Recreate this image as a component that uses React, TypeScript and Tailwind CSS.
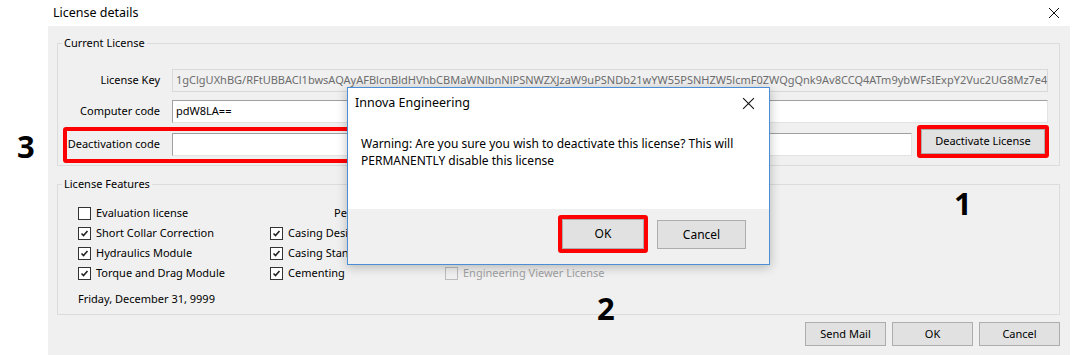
import React from 'react';

const LICENSE_KEY =
  '1gClgUXhBG/RFtUBBACl1bwsAQAyAFBlcnBldHVhbCBMaWNlbnNlPSNWZXJzaW9uPSNDb21wYW55PSNHZW5lcmF0ZWQgQnk9Av8CCQ4ATm9ybWFsIExpY2Vuc2UG8Mz7e49zlK2';

function CloseIcon({ size = 12 }: { size?: number }) {
  return (
    <svg width={size} height={size} viewBox="0 0 12 12" className="block">
      <path d="M1 1 L11 11 M11 1 L1 11" stroke="#111" strokeWidth="1" fill="none" />
    </svg>
  );
}

function Check({ checked, disabled }: { checked?: boolean; disabled?: boolean }) {
  return (
    <span
      className={
        'flex h-[13px] w-[13px] shrink-0 items-center justify-center border ' +
        (disabled ? 'border-[#bcbcbc] bg-[#f0f0f0]' : 'border-[#333] bg-white')
      }
    >
      {checked && (
        <svg width="9" height="9" viewBox="0 0 9 9">
          <path d="M1.5 4.5 L3.5 6.5 L7.5 2" stroke="#222" strokeWidth="1.6" fill="none" />
        </svg>
      )}
    </span>
  );
}

function Feature({ label, checked, disabled }: { label: string; checked?: boolean; disabled?: boolean }) {
  return (
    <div className="flex h-[20px] items-center gap-[5px] whitespace-nowrap">
      <Check checked={checked} disabled={disabled} />
      <span className={disabled ? 'text-[#a0a0a0]' : 'text-black'}>{label}</span>
    </div>
  );
}

function WinButton({ children, className = '' }: { children: React.ReactNode; className?: string }) {
  return (
    <button
      className={
        'flex items-center justify-center border border-[#adadad] bg-[#e1e1e1] text-black ' + className
      }
    >
      {children}
    </button>
  );
}

const inputBorder =
  'border-t border-l border-t-[#a0a0a0] border-l-[#a0a0a0] border-r border-b border-r-[#e3e3e3] border-b-[#e3e3e3]';

export default function App() {
  return (
    <div
      className="relative flex h-[355px] w-[1076px] flex-col overflow-hidden bg-white text-[11px] text-black"
      style={{ fontFamily: '"Segoe UI", "Noto Sans", sans-serif' }}
    >
      {/* title bar */}
      <div className="flex h-[26px] shrink-0 items-center justify-between pl-[53px] pr-[16px]">
        <span className="text-[12.5px]">License details</span>
        <CloseIcon />
      </div>

      {/* dialog body */}
      <div className="ml-[48px] flex w-[1022px] flex-1 flex-col bg-[#f0f0f0] pl-[9px] pr-[10px]">
        <fieldset className="relative mt-[9px] border border-[#dcdcdc] px-0 pb-[7px] pt-[18px]">
          <legend className="ml-[4px] px-[2px] leading-[16px]">Current License</legend>

          <div className="flex h-[23px] items-center">
            <span className="w-[108px] pr-[6px] text-right">License Key</span>
            <div className="ml-[6px] flex h-[23px] w-[876px] items-center overflow-hidden whitespace-nowrap border border-[#d9d9d9] bg-[#f0f0f0] pl-[3px] text-[#6d6d6d]">
              {LICENSE_KEY}
            </div>
          </div>

          <div className="mt-[8px] flex h-[23px] items-center">
            <span className="w-[108px] pr-[6px] text-right">Computer code</span>
            <div className={'ml-[6px] flex h-[23px] w-[876px] items-center bg-white pl-[3px] ' + inputBorder}>
              pdW8LA==
            </div>
          </div>

          <div className="mt-[2px] flex h-[33px] items-start">
            <span className="mt-[8px] flex h-[23px] w-[108px] items-center justify-end pr-[6px]">Deactivation code</span>
            <div className={'ml-[6px] mt-[8px] h-[23px] w-[740px] bg-white ' + inputBorder} />
            <div className="ml-[5px] rounded-[3px] border-4 border-[#ff0000]">
              <WinButton className="h-[25px] w-[124px]">Deactivate License</WinButton>
            </div>
          </div>

          {/* annotation box */}
          <div className="pointer-events-none absolute left-[5px] top-[76px] h-[36px] w-[292px] rounded-[3px] border-4 border-[#ff0000]" />
        </fieldset>

        <fieldset className="mt-[10px] border border-[#dcdcdc] pb-[5px] pl-[20px] pt-[11px]">
          <legend className="ml-[-16px] px-[2px] leading-[16px]">License Features</legend>
          <div className="grid grid-cols-[192px_175px_1fr]">
            <Feature label="Evaluation license" />
            <div className="flex h-[20px] items-center pl-[64px]">Perpetual License</div>
            <div />
            <Feature label="Short Collar Correction" checked />
            <Feature label="Casing Design" checked />
            <div />
            <Feature label="Hydraulics Module" checked />
            <Feature label="Casing Standards" checked />
            <div />
            <Feature label="Torque and Drag Module" checked />
            <Feature label="Cementing" checked />
            <Feature label="Engineering Viewer License" disabled />
          </div>
          <div className="mt-[6px] flex h-[20px] items-center">Friday, December 31, 9999</div>
        </fieldset>

        <div className="mt-[7px] flex justify-end gap-[6px]">
          <WinButton className="h-[24px] w-[81px]">Send Mail</WinButton>
          <WinButton className="h-[24px] w-[81px]">OK</WinButton>
          <WinButton className="h-[24px] w-[81px]">Cancel</WinButton>
        </div>
      </div>

      {/* confirmation message box */}
      <div className="absolute left-[347px] top-[87px] flex h-[178px] w-[423px] flex-col border border-[#4a8fd6] bg-white text-[12px] shadow-[0_2px_10px_rgba(0,0,0,0.25)]">
        <div className="flex h-[31px] items-center justify-between pl-[7px] pr-[14px]">
          <span className="text-[12.5px]">Innova Engineering</span>
          <CloseIcon size={13} />
        </div>
        <div className="flex-1 pl-[13px] pt-[16px] leading-[17px]">
          Warning: Are you sure you wish to deactivate this license? This will
          <br />
          PERMANENTLY disable this license
        </div>
        <div className="flex h-[55px] items-start justify-end gap-[9px] bg-[#f0f0f0] pr-[23px] pt-[6px]">
          <div className="rounded-[3px] border-4 border-[#ff0000]">
            <WinButton className="h-[30px] w-[82px]">OK</WinButton>
          </div>
          <WinButton className="mt-[5px] h-[29px] w-[89px]">Cancel</WinButton>
        </div>
      </div>

      {/* step annotations */}
      <span className="absolute left-[17px] top-[131px] text-[31px] font-bold leading-none" style={{ fontFamily: '"Open Sans", sans-serif' }}>3</span>
      <span className="absolute left-[954px] top-[188px] text-[31px] font-bold leading-none" style={{ fontFamily: '"Open Sans", sans-serif' }}>1</span>
      <span className="absolute left-[597px] top-[293px] text-[31px] font-bold leading-none" style={{ fontFamily: '"Open Sans", sans-serif' }}>2</span>
    </div>
  );
}
